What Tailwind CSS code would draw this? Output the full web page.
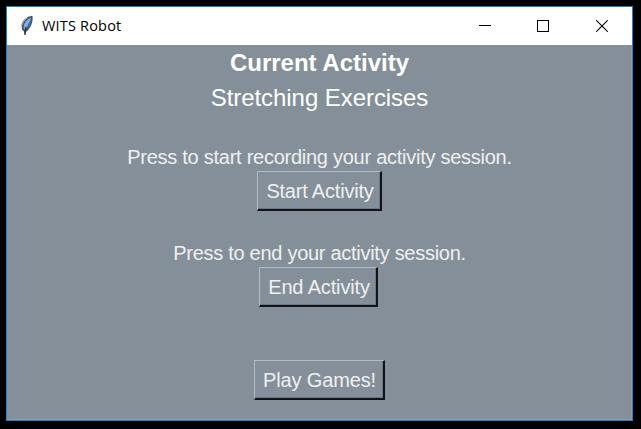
<!DOCTYPE html>
<html lang="en">
<head>
<meta charset="utf-8">
<title>WITS Robot</title>
<script src="https://cdn.jsdelivr.net/npm/@tailwindcss/browser@4"></script>
</head>
<body class="w-[641px] h-[429px] overflow-hidden bg-black pl-[6px] pt-[6px]">
<div class="flex h-[415px] w-[627px] flex-col border border-[#1883d7] bg-[#858f9a]">
  <header class="flex h-[38px] shrink-0 items-center bg-white pl-[13px] text-black">
    <svg class="h-[22px] w-[14px] shrink-0" viewBox="0 0 14 22">
      <path d="M12 .8C7 1.500 2.500 5 1.500 10L2 14.500L4 16.500L4.800 20L6 17C10 14 13.500 7 12.500 1.200Z" fill="#4b535c"/>
      <path d="M11 2.500C7 4 3.500 8 3.500 13L5 15C8 11 10.500 7 11 2.500Z" fill="#7cb0e8"/>
      <path d="M11.600 3.500C11 9 8.500 13 5.500 15.500C7 11 9 7 11.600 3.500Z" fill="#3970b5"/>
      <path d="M6 12Q5 15 5 20" fill="none" stroke="#1b2530" stroke-width="1.200"/>
      <path d="M2.200 10L4 6L7 3" fill="none" stroke="#a5a5a5" stroke-width="1"/>
    </svg>
    <span class="ml-[8px] font-['Open_Sans','Noto_Sans',sans-serif] text-[14.500px] leading-5 tracking-[.18px]">WITS Robot</span>
    <div class="ml-auto flex items-center pr-[24px]">
      <svg class="h-3 w-3" viewBox="0 0 12 12"><path d="M0 5.500H12" stroke="#000" shape-rendering="crispEdges"/></svg>
      <svg class="ml-[46px] h-3 w-3" viewBox="0 0 12 12"><path d="M.5.5H11.500V11.500H.5Z" fill="none" stroke="#000" shape-rendering="crispEdges"/></svg>
      <svg class="ml-[47px] h-3 w-3" viewBox="0 0 12 12"><path d="M.3.3L11.700 11.700M11.700.3L.3 11.700" stroke="#000" stroke-width="1.100"/></svg>
    </div>
  </header>
  <main class="flex flex-1 flex-col items-center border-r border-b border-[#969ca3] font-['Liberation_Sans',Arial,sans-serif] text-[20px] tracking-[-0.260px] whitespace-nowrap text-[#f0f0f0]">
    <h1 class="h-[35px] pl-px text-[24px] leading-[35px] font-bold tracking-normal text-white">Current Activity</h1>
    <h2 class="h-[36px] pl-px text-[24px] leading-[36px] tracking-[-0.060px] text-white">Stretching Exercises</h2>
    <p class="mt-[29px] h-[26px] pl-px leading-[25px]">Press to start recording your activity session.</p>
    <button class="ml-px h-[40px] w-[125px] border-t border-r-2 border-b-2 border-l border-t-[#b0bccb] border-r-[#101418] border-b-[#101418] border-l-[#b0bccb] pt-px pl-[2px] leading-[37px] tracking-[-0.200px] shadow-[inset_-1px_-1px_0_#6f7882]">Start Activity</button>
    <p class="mt-[30px] h-[26px] pl-px leading-[25px] tracking-[-0.280px]">Press to end your activity session.</p>
    <button class="mr-px h-[40px] w-[119px] border-t border-r-2 border-b-2 border-l border-t-[#b0bccb] border-r-[#101418] border-b-[#101418] border-l-[#b0bccb] pt-px pl-[2px] leading-[37px] tracking-[-0.150px] shadow-[inset_-1px_-1px_0_#6f7882]">End Activity</button>
    <button class="mt-[53px] h-[40px] w-[131px] border-t border-r-2 border-b-2 border-l border-t-[#b0bccb] border-r-[#101418] border-b-[#101418] border-l-[#b0bccb] pt-px pl-[2px] leading-[37px] tracking-[-0.150px] shadow-[inset_-1px_-1px_0_#6f7882]">Play Games!</button>
  </main>
</div>
</body>
</html>
